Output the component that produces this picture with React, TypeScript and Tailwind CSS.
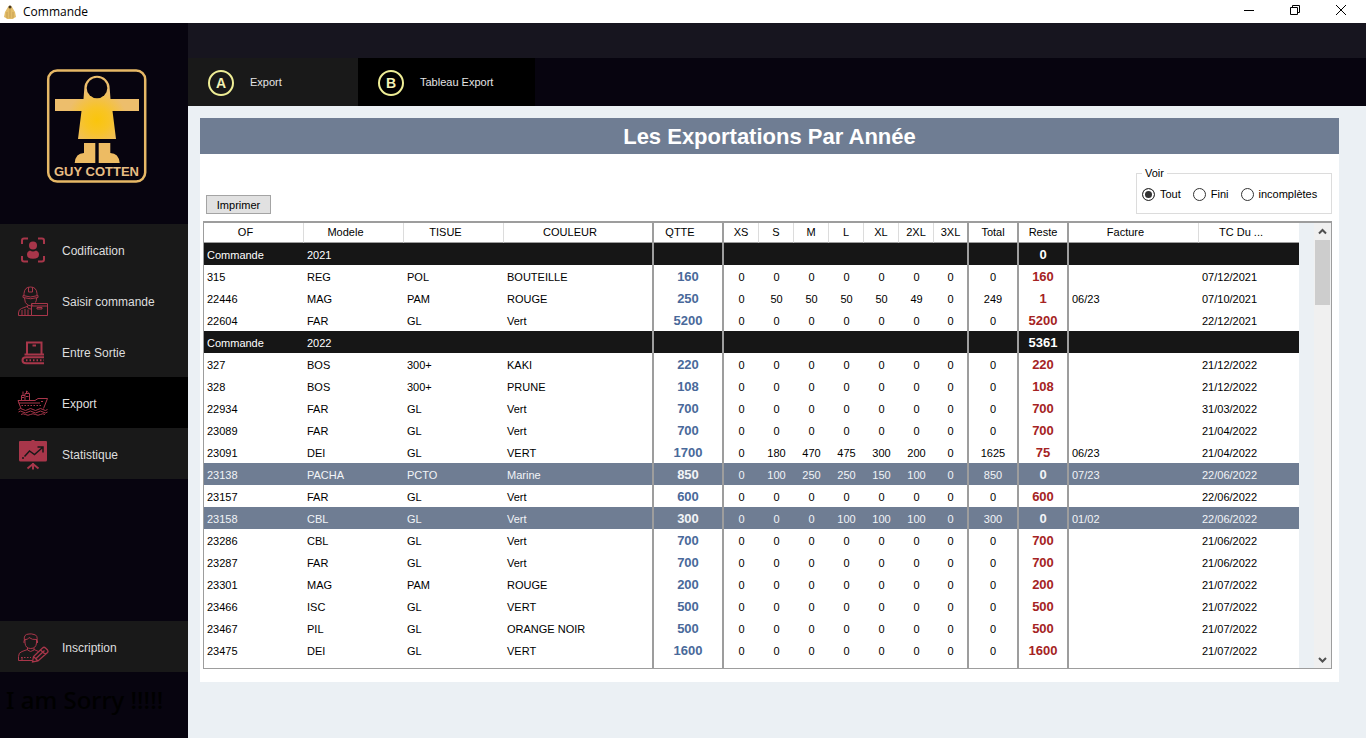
import { useState, type ReactNode } from "react";

type Row = {
  kind?: "group" | "done";
  of: string;
  modele: string;
  tissu?: string;
  couleur?: string;
  qtte?: string;
  sizes?: string[];
  total?: string;
  reste: string;
  facture?: string;
  date?: string;
};

const zeros = ["0", "0", "0", "0", "0", "0", "0"];

const open = (of: string, modele: string, tissu: string, couleur: string, qtte: string, date: string): Row => ({
  of, modele, tissu, couleur, qtte, sizes: zeros, total: "0", reste: qtte, date,
});

const rows: Row[] = [
  { kind: "group", of: "Commande", modele: "2021", reste: "0" },
  open("315", "REG", "POL", "BOUTEILLE", "160", "07/12/2021"),
  { of: "22446", modele: "MAG", tissu: "PAM", couleur: "ROUGE", qtte: "250", sizes: ["0", "50", "50", "50", "50", "49", "0"], total: "249", reste: "1", facture: "06/23", date: "07/10/2021" },
  open("22604", "FAR", "GL", "Vert", "5200", "22/12/2021"),
  { kind: "group", of: "Commande", modele: "2022", reste: "5361" },
  open("327", "BOS", "300+", "KAKI", "220", "21/12/2022"),
  open("328", "BOS", "300+", "PRUNE", "108", "21/12/2022"),
  open("22934", "FAR", "GL", "Vert", "700", "31/03/2022"),
  open("23089", "FAR", "GL", "Vert", "700", "21/04/2022"),
  { of: "23091", modele: "DEI", tissu: "GL", couleur: "VERT", qtte: "1700", sizes: ["0", "180", "470", "475", "300", "200", "0"], total: "1625", reste: "75", facture: "06/23", date: "21/04/2022" },
  { kind: "done", of: "23138", modele: "PACHA", tissu: "PCTO", couleur: "Marine", qtte: "850", sizes: ["0", "100", "250", "250", "150", "100", "0"], total: "850", reste: "0", facture: "07/23", date: "22/06/2022" },
  open("23157", "FAR", "GL", "Vert", "600", "22/06/2022"),
  { kind: "done", of: "23158", modele: "CBL", tissu: "GL", couleur: "Vert", qtte: "300", sizes: ["0", "0", "0", "100", "100", "100", "0"], total: "300", reste: "0", facture: "01/02", date: "22/06/2022" },
  open("23286", "CBL", "GL", "Vert", "700", "21/06/2022"),
  open("23287", "FAR", "GL", "Vert", "700", "21/06/2022"),
  open("23301", "MAG", "PAM", "ROUGE", "200", "21/07/2022"),
  open("23466", "ISC", "GL", "VERT", "500", "21/07/2022"),
  open("23467", "PIL", "GL", "ORANGE NOIR", "500", "21/07/2022"),
  open("23475", "DEI", "GL", "VERT", "1600", "21/07/2022"),
];

const columns = [
  { label: "OF", width: "w-[100px]", sortable: true },
  { label: "Modele", width: "w-[100px]", sortable: true },
  { label: "TISUE", width: "w-[100px]", sortable: true },
  { label: "COULEUR", width: "w-[150px]", sortable: true, thick: true },
  { label: "QTTE", width: "w-[70px]", sortable: true, thick: true },
  { label: "XS", width: "w-[35px]" },
  { label: "S", width: "w-[35px]" },
  { label: "M", width: "w-[35px]" },
  { label: "L", width: "w-[35px]" },
  { label: "XL", width: "w-[35px]" },
  { label: "2XL", width: "w-[35px]" },
  { label: "3XL", width: "w-[35px]", thick: true },
  { label: "Total", width: "w-[50px]", thick: true },
  { label: "Reste", width: "w-[50px]", thick: true },
  { label: "Facture", width: "w-[130px]", sortable: true },
  { label: "TC Du ...", width: "w-[100px]", sortable: true },
];

function Icon({ children, width = 1 }: { children: ReactNode; width?: number }) {
  return (
    <svg viewBox="0 0 32 32" className="size-8 shrink-0 text-[#a8364a]" fill="none" stroke="currentColor" strokeWidth={width} aria-hidden="true">
      {children}
    </svg>
  );
}

const PersonScan = () => (
  <Icon width={2}>
    <path d="M5 10V6.500Q5 4.500 7 4.500H11M21 4.500H25Q27 4.500 27 6.500V10M27 22V25.500Q27 27.500 25 27.500H21M11 27.500H7Q5 27.500 5 25.500V22" />
    <circle cx="16" cy="11.500" r="4" fill="currentColor" stroke="none" />
    <path d="M13 16.500Q16 18.500 19 16.500Q22 17.500 22 20.500Q22 24.800 16 24.800Q10 24.800 10 20.500Q10 17.500 13 16.500Z" fill="currentColor" stroke="none" />
  </Icon>
);

const Worker = () => (
  <Icon>
    <path d="M7 10.500V8.500Q7.500 2 13.500 2Q19.500 2 20 8.500V10.500M6 10.500Q13.500 13.500 21 10.500V12.500Q13.500 15 6 12.500ZM11.500 2.500V7M15.500 2.500V7M11.500 7H15.500" />
    <path d="M7.500 13Q7.500 18.500 11 20.200Q13.500 21.500 16 20M19.500 13Q19.500 16 18.500 17.500M10.500 20.500V22.500Q12 24 14 24" />
    <path d="M10 21.500L4.500 23.500Q1.500 24.500 1.500 28V30.500H14.500M5 25V30M8 24V30M11 24.500V30" />
    <path d="M14.500 18.500H30.500V30.500H14.500ZM14.500 21H30.500M20 22.500H25V24H20Z" />
  </Icon>
);

const Conveyor = () => (
  <Icon width={2}>
    <path d="M10 6.500H24.500V18.500H10ZM7.500 18.500H27" />
    <path d="M15.500 9.500H19" />
    <path d="M27 21.200H9Q5.500 21.200 5.500 24.200Q5.500 27.300 9 27.300H27" />
    <path d="M9 24.200H27" strokeDasharray="1.500 2" />
  </Icon>
);

const Ship = () => (
  <Icon>
    <path d="M1 13.500H18L21 11.500H30.500L26.500 21.500M1 13.500L4 21.500M1.500 16H23M4.500 13V8.500H8V6.500H12.500V13M8 8.500V13M6 8V4.500M9.500 6.500V4L11.500 5.500M24 14.500H26M4.500 10.500H7M9 9.500H11.500" />
    <path d="M4.500 18.500H25" strokeDasharray="1.500 1.500" />
    <path d="M1.500 22.500Q3.500 20.500 6 22.500T11 22.500T16 22.500T21 22.500T26 22.500T30.500 22.500M1.500 25Q3.500 23 6 25T11 25T16 25T21 25T26 25T30.500 25M4 27.500Q6 26 8.500 27.500T13.500 27.500T18.500 27.500T23.500 27.500T28 27.500" />
  </Icon>
);

const Board = () => (
  <Icon>
    <path d="M3 3H14.500V2H17.500V3H29Q30 3 30 4V22Q30 23.500 28.500 23.500H3.500Q2 23.500 2 22V4Q2 3 3 3Z" fill="currentColor" stroke="none" />
    <path d="M7.500 18.500L12.500 13L17.500 16.500L25.500 9.500M20.500 9H26V14.500" stroke="#191919" strokeWidth={1.5} />
    <circle cx="6" cy="20" r="1" fill="#191919" stroke="none" />
    <path d="M16 25V31.500M10.500 30.500L16 26L21.500 30.500" strokeWidth={2} />
  </Icon>
);

const Register = () => (
  <Icon>
    <path d="M7.500 10Q6 3 12 3Q14 2.500 17 3.500Q21 4 20 10M8 8.500Q11 9 12 6.500Q15 9 19.500 8.500M8 8V12Q8.500 17.500 13.700 17.500Q19 17.500 19.500 12V8M7 9.500V12M20.500 9.500V12" />
    <path d="M10.500 17V19Q13.500 22 17 19V17M10.500 18.500L5 20.500Q1.500 21.500 1.500 25.500V29.500H15M17 18.500L21.500 20.500M5 26V29" />
    <path d="M4 26.500H14" strokeDasharray="1.500 1.500" />
    <path d="M15.500 31L16.500 25.500L25.500 17Q27 15.500 28.500 17L30.500 19Q31.500 20.500 30.500 21.500L21 30ZM16.500 25.500L21 30M19 27.500L27.500 19.500M23.500 19L28.500 23.500" strokeWidth={1.3} />
  </Icon>
);

function Logo() {
  return (
    <svg viewBox="45 68 104 118" className="h-[118px] w-[104px]" role="img" aria-label="Guy Cotten">
      <defs>
        <radialGradient id="coat" gradientUnits="userSpaceOnUse" cx="97" cy="120" r="30">
          <stop offset="0" stopColor="#fac50c" />
          <stop offset="0.400" stopColor="#f8c425" />
          <stop offset="1" stopColor="#edbe6c" />
        </radialGradient>
      </defs>
      <rect x="48.200" y="70.500" width="97" height="111" rx="9" fill="none" stroke="#e6b866" strokeWidth="2.500" />
      <path d="M84.300 88.500A12.700 12.700 0 0 1 109.700 88.500L110.500 99H139V111H112.500L116 139H78L81.500 111H55V99H83.500Z" fill="url(#coat)" />
      <circle cx="97" cy="88" r="10.300" fill="#07040f" />
      <path d="M84 143H95.300V163H74.700Q75.500 153 84 153ZM98.700 143H110.300V153Q118.700 153 119.700 163H98.700Z" fill="#edbb63" />
      <text x="96.500" y="176" textAnchor="middle" fontSize="13" fontWeight="700" fill="#e8bd84" className="font-['Liberation_Sans',Arial,sans-serif]">GUY COTTEN</text>
    </svg>
  );
}

function MenuItem({ icon, label, active }: { icon: ReactNode; label: string; active?: boolean }) {
  return (
    <button type="button" className={`flex h-[51px] w-full items-center gap-[13px] pl-[17px] text-left text-xs text-[#dedede] ${active ? "bg-black" : "bg-[#191919]"}`}>
      {icon}
      <span className="pt-0.5">{label}</span>
    </button>
  );
}

function Tab({ letter, label, active }: { letter: string; label: string; active?: boolean }) {
  return (
    <button
      type="button"
      role="tab"
      aria-selected={!!active}
      className={`flex h-12 items-center gap-4 pl-5 text-[11px] text-[#e4e4e4] ${active ? "w-[177px] bg-black" : "w-[170px] bg-[#191919]"}`}
    >
      <span className="mt-0.5 flex size-[26px] items-center justify-center rounded-full border-2 border-[#efee96] text-sm font-bold text-[#f3f2b4]">{letter}</span>
      <span>{label}</span>
    </button>
  );
}

function Grid() {
  return (
    <table className="w-full table-fixed border-separate border-spacing-0">
      <thead>
        <tr className="h-5">
          {columns.map((c) => (
            <th
              key={c.label}
              scope="col"
              className={`${c.width} border-b border-b-[#9d9d9d] p-0 text-center leading-[19px] font-normal whitespace-nowrap ${c.sortable ? "pr-4" : ""} ${c.thick ? "border-r-2 border-r-[#9d9d9d]" : "border-r border-r-[#dcdcdc] last:border-r-0"}`}
            >
              {c.label}
            </th>
          ))}
        </tr>
      </thead>
      <tbody>
        {rows.map((r) => {
          const tone = r.kind === "group" ? "bg-[#161616] text-white" : r.kind === "done" ? "bg-[#6f7d93] text-[#f2f4f7]" : "bg-white text-black";
          const left = "p-0 pt-0.5 pl-[3px] whitespace-nowrap";
          const center = "p-0 pt-0.5 text-center";
          const line = "border-r-2 border-[#9d9d9d]";
          const bold = `${center} text-[13px] font-bold`;
          return (
            <tr key={r.of + r.modele} className={`h-[22px] ${tone}`}>
              <td className={left}>{r.of}</td>
              <td className={left}>{r.modele}</td>
              <td className={left}>{r.tissu}</td>
              <td className={`${left} ${line}`}>{r.couleur}</td>
              <td className={`${bold} ${line} ${r.kind ? "" : "text-[#49699a]"}`}>{r.qtte}</td>
              {zeros.map((_, i) => (
                <td key={i} className={`${center} ${i === 6 ? line : ""}`}>{r.sizes?.[i]}</td>
              ))}
              <td className={`${center} ${line}`}>{r.total}</td>
              <td className={`${bold} ${line} ${r.kind ? "" : "text-[#a52323]"}`}>{r.reste}</td>
              <td className={left}>{r.facture}</td>
              <td className={left}>{r.date}</td>
            </tr>
          );
        })}
        <tr className="h-[7px] bg-white" aria-hidden="true">
          {columns.map((c) => (
            <td key={c.label} className={c.thick ? "border-r-2 border-[#9d9d9d] p-0" : "p-0"} />
          ))}
        </tr>
      </tbody>
    </table>
  );
}

function Filter() {
  const [value, setValue] = useState("Tout");
  return (
    <fieldset className="h-[49px] w-[196px] border border-[#dcdcdc] pl-[5px]">
      <legend className="px-[3px] leading-4">Voir</legend>
      <div className="flex items-center gap-3 pt-[5px]">
        {["Tout", "Fini", "incomplètes"].map((name) => (
          <label key={name} className="flex items-center gap-[5px]">
            <input
              type="radio"
              name="voir"
              checked={value === name}
              onChange={() => setValue(name)}
              className="size-[13px] appearance-none rounded-full border border-[#333] bg-white checked:bg-[#333] checked:shadow-[inset_0_0_0_2px_white]"
            />
            {name}
          </label>
        ))}
      </div>
    </fieldset>
  );
}

export default function App() {
  return (
    <div className="flex min-h-screen flex-col bg-[#ebf0f4] font-['Liberation_Sans',Arial,sans-serif]">
      <header className="flex h-[23px] items-center bg-white pr-[2px] text-black">
        <svg viewBox="0 0 16 16" className="ml-[2px] size-4" aria-hidden="true">
          <path d="M6 3Q8 0 10 3L13 8L14 13L12 14L11 15H5L4 14L2 13L3 8Z" fill="#e2bd69" />
          <circle cx="8" cy="3" r="1.500" fill="#4b3a20" />
          <path d="M5 8V14M11 8V14M8 5V14" stroke="#b98f43" strokeWidth="0.600" />
        </svg>
        <h1 className="ml-[5px] font-['Open_Sans','Noto_Sans',sans-serif] text-xs">Commande</h1>
        <div className="ml-auto flex h-full">
          <button type="button" aria-label="Réduire" className="flex w-[46px] items-center justify-center pb-1">
            <svg viewBox="0 0 12 12" className="size-3" stroke="black" fill="none"><path d="M1 6.500H11" /></svg>
          </button>
          <button type="button" aria-label="Restaurer" className="flex w-[46px] items-center justify-center pb-[3px]">
            <svg viewBox="0 0 12 12" className="size-3" stroke="black" fill="none"><path d="M1.500 3.500H8.500V10.500H1.500ZM3.500 3.500V1.500H10.500V8.500H8.500" /></svg>
          </button>
          <button type="button" aria-label="Fermer" className="flex w-[46px] items-center justify-center pb-[3px]">
            <svg viewBox="0 0 12 12" className="size-3" stroke="black" fill="none"><path d="M1 1L11 11M11 1L1 11" /></svg>
          </button>
        </div>
      </header>

      <div className="flex grow">
        <aside className="flex w-[188px] shrink-0 flex-col bg-[#07040f]">
          <div className="flex justify-center pt-[45px] pb-[38px] pl-[6px]">
            <Logo />
          </div>
          <nav>
            <MenuItem icon={<PersonScan />} label="Codification" />
            <MenuItem icon={<Worker />} label="Saisir commande" />
            <MenuItem icon={<Conveyor />} label="Entre Sortie" />
            <MenuItem icon={<Ship />} label="Export" active />
            <MenuItem icon={<Board />} label="Statistique" />
          </nav>
          <div className="mt-auto">
            <MenuItem icon={<Register />} label="Inscription" />
            <p className="h-[66px] pt-2 pl-[6px] font-['Noto_Sans',sans-serif] text-2xl leading-10 font-medium text-black">I am Sorry !!!!!</p>
          </div>
        </aside>

        <div className="flex min-w-0 grow flex-col">
          <div className="h-[35px] bg-[#17151f]" />
          <div role="tablist" className="flex bg-[#07040f]">
            <Tab letter="A" label="Export" />
            <Tab letter="B" label="Tableau Export" active />
          </div>

          <main className="pt-3 pr-[27px] pl-3">
            <section className="bg-white text-[11px] leading-4 text-black">
              <h2 className="bg-[#6f7d93] pt-px text-center text-[22px] leading-[35px] font-bold text-white">Les Exportations Par Année</h2>
              <div className="flex items-end justify-between pt-[11px] pr-[7px] pl-[6px]">
                <button type="button" className="h-[19px] w-[65px] border border-[#a4a4a4] bg-[#e1e1e1]">Imprimer</button>
                <Filter />
              </div>
              <div className="pt-[7px] pr-[7px] pb-[13px] pl-[3px]">
                <div className="flex border border-t-2 border-[#9d9d9d]">
                  <div className="min-w-0 grow"><Grid /></div>
                  <div className="w-[15px] shrink-0 bg-[#ebf0f4]" />
                  <div className="flex w-[17px] shrink-0 flex-col items-center bg-[#f0f0f0]">
                    <svg viewBox="0 0 17 17" className="size-[17px]" fill="none" stroke="#505050" strokeWidth="2"><path d="M5 10.500L8.500 7L12 10.500" /></svg>
                    <div className="h-[65px] w-[15px] bg-[#cdcdcd]" />
                    <svg viewBox="0 0 17 17" className="mt-auto size-[17px]" fill="none" stroke="#505050" strokeWidth="2"><path d="M5 7L8.500 10.500L12 7" /></svg>
                  </div>
                </div>
              </div>
            </section>
          </main>
        </div>
      </div>
    </div>
  );
}
